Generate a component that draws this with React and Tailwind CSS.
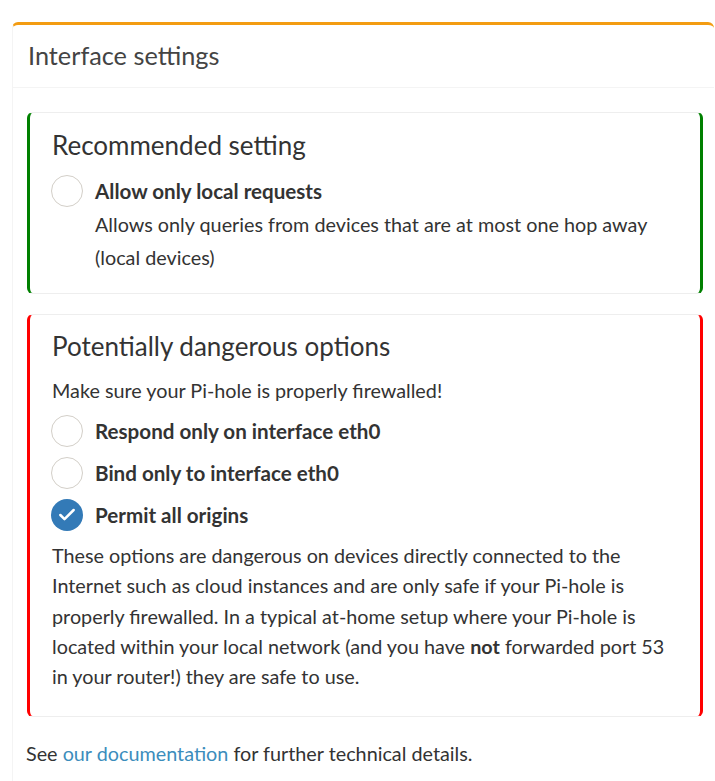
import { Check } from 'lucide-react';

const font = { fontFamily: 'Lato, "Open Sans", sans-serif' };

const Radio = ({ checked }) => (
  <span
    className={
      checked
        ? 'flex h-[32px] w-[32px] shrink-0 items-center justify-center rounded-full bg-[#337ab7]'
        : 'flex h-[32px] w-[32px] shrink-0 rounded-full border border-[#d3cfc8] bg-white'
    }
  >
    {checked && <Check size={20} strokeWidth={3} className="text-white" />}
  </span>
);

const Option = ({ label, checked }) => (
  <div className="-ml-[1px] flex h-[42px] items-center gap-[12px]">
    <Radio checked={checked} />
    <span className="text-[20.6px] font-bold text-[#333]">{label}</span>
  </div>
);

export default function App() {
  return (
    <div className="min-h-screen bg-white pl-[12px] pt-[22px] text-[#333]" style={font}>
      <div className="w-[702px] rounded-t-[6px] border-t-[3px] border-l border-[#f39c12] border-l-[#f4f4f4] bg-white pb-[40px]">
        {/* Header */}
        <div className="flex h-[63px] items-center border-b border-[#f4f4f4] pl-[15px]">
          <h3 className="text-[25.3px] text-[#444]">Interface settings</h3>
        </div>

        <div className="pl-[14px] pr-[11px] pt-[24px]">
          {/* Recommended */}
          <div className="rounded-[6px] border border-x-[3px] border-[#eee] border-x-[#008000] pl-[22px] pr-[20px] pt-[14px] pb-[19px]">
            <h4 className="text-[26px] leading-[36px] text-[#333]">Recommended setting</h4>
            <div className="mt-[7px]">
              <Option label="Allow only local requests" />
              <p className="-mt-[4px] pl-[43px] text-[19.8px] leading-[33px]">
                Allows only queries from devices that are at most one hop away
                <br />
                (local devices)
              </p>
            </div>
          </div>

          {/* Dangerous */}
          <div className="mt-[20px] rounded-[6px] border border-x-[3px] border-[#eee] border-x-[#ff0000] pl-[22px] pr-[16px] pt-[13px] pb-[25px]">
            <h4 className="text-[26px] leading-[36px] text-[#333]">Potentially dangerous options</h4>
            <p className="mt-[11px] text-[19.8px] leading-[30px]">Make sure your Pi-hole is properly firewalled!</p>
            <div className="mt-[5px]">
              <Option label="Respond only on interface eth0" />
              <Option label="Bind only to interface eth0" />
              <Option label="Permit all origins" checked />
            </div>
            <p className="mt-[4px] text-[19.8px] leading-[30.3px]">
              These options are dangerous on devices directly connected to the Internet such as cloud
              instances and are only safe if your Pi-hole is properly firewalled. In a typical at-home
              setup where your Pi-hole is located within your local network (and you have <b>not</b>{' '}
              forwarded port 53 in your router!) they are safe to use.
            </p>
          </div>

          <p className="mt-[21px] -ml-[1px] text-[19.8px] leading-[30px]">
            See <a className="text-[#3c8dbc]">our documentation</a> for further technical details.
          </p>
        </div>
      </div>
    </div>
  );
}
